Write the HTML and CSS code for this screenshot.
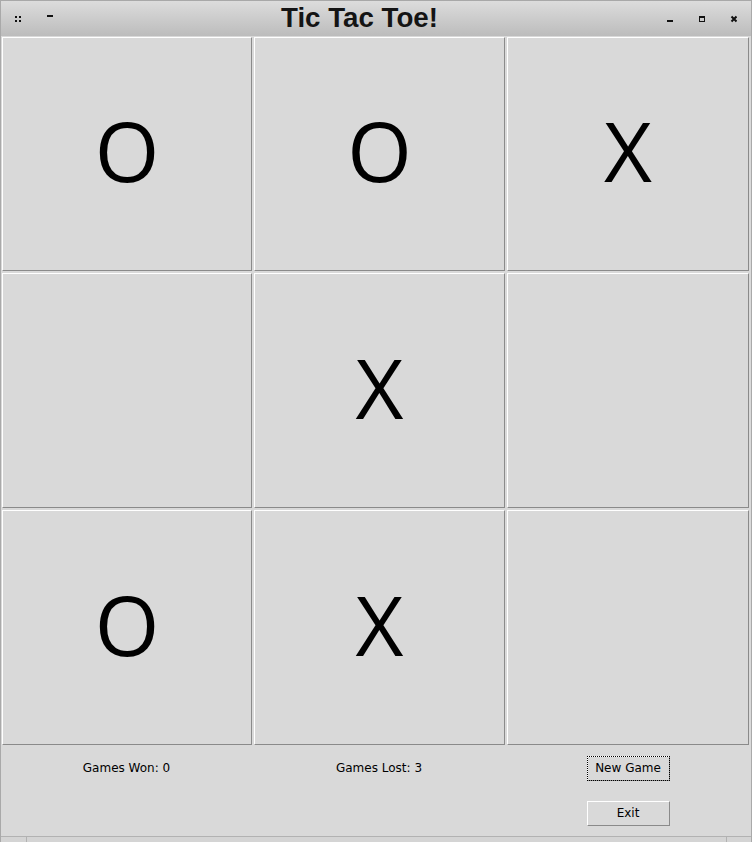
FILE: index.html
```html
<!DOCTYPE html>
<html>
<head>
<meta charset="utf-8">
<link rel="stylesheet" href="styles.css">
</head>
<body>
<div class="window">
  <div class="titlebar">
    <svg class="tb-left" width="40" height="8" viewBox="0 0 40 8">
      <rect x="0" y="1" width="2" height="2" fill="#111"/>
      <rect x="4" y="1" width="2" height="2" fill="#111"/>
      <rect x="0" y="5" width="2" height="2" fill="#111"/>
      <rect x="4" y="5" width="2" height="2" fill="#111"/>
      <rect x="32" y="0" width="6" height="2" fill="#111"/>
    </svg>
    <div class="title">Tic Tac Toe!</div>
    <svg class="tb-right" width="70" height="8" viewBox="0 0 70 8">
      <rect x="0" y="5" width="6" height="2" fill="#111"/>
      <rect x="32" y="1" width="6" height="2" fill="#111"/>
      <rect x="32" y="1" width="1" height="6" fill="#111"/>
      <rect x="37" y="1" width="1" height="6" fill="#111"/>
      <rect x="32" y="6" width="6" height="1" fill="#111"/>
      <path d="M64.5 1.5 L69.5 6.5 M69.5 1.5 L64.5 6.5" stroke="#111" stroke-width="2" fill="none"/>
    </svg>
  </div>
  <div class="board">
    <div class="cell">O</div>
    <div class="cell">O</div>
    <div class="cell">X</div>
    <div class="cell"></div>
    <div class="cell">X</div>
    <div class="cell"></div>
    <div class="cell">O</div>
    <div class="cell">X</div>
    <div class="cell"></div>
  </div>
  <div class="footer">
    <div class="label">Games Won: 0</div>
    <div class="label">Games Lost: 3</div>
    <div class="btnwrap"><button class="btn focused">New Game</button></div>
    <div></div>
    <div></div>
    <div class="btnwrap"><button class="btn">Exit</button></div>
  </div>
  <div class="bottomframe">
    <div class="seg seg-a"></div>
    <div class="seg seg-b"></div>
    <div class="seg seg-c"></div>
  </div>
</div>
</body>
</html>
```
FILE: styles.css
```css
html, body {
  margin: 0;
  padding: 0;
  background: #d9d9d9;
}
.window {
  width: 752px;
  height: 842px;
  box-sizing: border-box;
  border-left: 1px solid #a9a9a9;
  border-right: 1px solid #a9a9a9;
  background: #d9d9d9;
  display: flex;
  flex-direction: column;
  font-family: "DejaVu Sans", sans-serif;
}
.titlebar {
  height: 36px;
  box-sizing: border-box;
  border-top: 1px solid #a8a8a8;
  background: linear-gradient(#dcdcdc, #bcbcbc);
  display: flex;
  align-items: center;
  flex: none;
}
.tb-left {
  margin-left: 14px;
  flex: none;
}
.title {
  margin-left: 226px;
  font-family: "Liberation Sans", Arial, sans-serif;
  font-weight: bold;
  font-size: 27.7px;
  line-height: 30px;
  color: #141414;
  margin-top: -2px;
}
.tb-right {
  margin-left: auto;
  margin-right: 14px;
  flex: none;
}
.board {
  display: grid;
  grid-template-columns: 252px 253px 244px;
  grid-template-rows: 236px 237px 237px;
  flex: none;
}
.cell {
  margin: 1px;
  border: 1px solid;
  border-color: #ffffff #8a8a8a #8a8a8a #ffffff;
  background: #d9d9d9;
  display: flex;
  align-items: center;
  justify-content: center;
  font-family: "Open Sans", "Liberation Sans", sans-serif;
  font-size: 83px;
  color: #000;
  line-height: 1;
  padding-bottom: 9px;
}
.footer {
  display: grid;
  grid-template-columns: 252px 253px 244px;
  grid-template-rows: 44px 46px;
  flex: none;
}
.label {
  display: flex;
  align-items: center;
  justify-content: center;
  font-size: 12px;
  color: #000;
  padding-right: 1px;
}
.btnwrap {
  display: flex;
  align-items: center;
  justify-content: center;
}
.btn {
  width: 83px;
  height: 25px;
  box-sizing: border-box;
  margin: 0;
  padding: 0;
  background: #d9d9d9;
  border: 1px solid;
  border-color: #ffffff #8a8a8a #8a8a8a #ffffff;
  font-family: "DejaVu Sans", sans-serif;
  font-size: 12px;
  color: #000;
}
.focused {
  outline: 1px dotted #000;
  outline-offset: -1px;
}
.bottomframe {
  flex: 1;
  display: flex;
  border-top: 1px solid #b2b2b2;
  background: #d4d4d4;
}
.seg-a {
  width: 25px;
  border-right: 1px solid #b2b2b2;
}
.seg-b {
  flex: 1;
  border-right: 1px solid #b2b2b2;
}
.seg-c {
  width: 24px;
}
```
